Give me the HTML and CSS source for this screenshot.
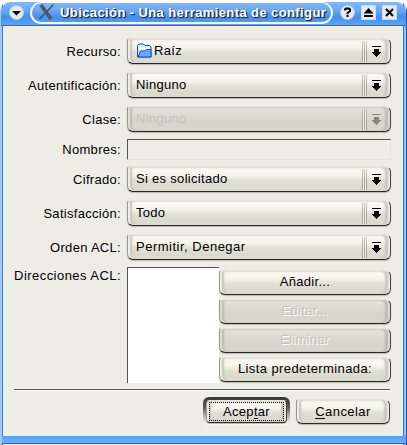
FILE: index.html
```html
<!DOCTYPE html>
<html lang="es">
<head>
<meta charset="utf-8">
<title>Ubicación</title>
<link rel="stylesheet" href="styles.css">
</head>
<body>
<svg class="defs" width="0" height="0">
  <symbol id="drop" viewBox="0 0 9 11"><path d="M0 0h9v1H0zM2 3h5v3h2v1H8v1H7v1H6v1H5v1H4v-1H3V9H2V8H1V7H0V6h2z"/></symbol>
</svg>
<main class="window">
  <header class="titlebar">
    <svg class="round" viewBox="0 0 15 15"><circle cx="7.5" cy="7.5" r="7"/><path d="M3 6h9L7.500 10.500z"/></svg>
    <div class="caption">
      <svg class="logo" viewBox="0 0 17 16"><path class="thin" d="M15.500 0.500L1.500 15"/><path class="thick" d="M3 1L13 15"/></svg>
      <span>Ubicación - Una herramienta de configur</span>
    </div>
    <svg class="round help" viewBox="0 0 15 15"><circle cx="7.500" cy="7.500" r="7"/><path class="mark" d="M5 5.500V4.500L6 3.500H9L10 4.500V6L7.500 8V9.200"/><path d="M6.500 10h2v2h-2z"/></svg>
    <svg class="square" viewBox="0 0 15 15"><rect width="15" height="15"/><path d="M7.500 3L12.500 8.500h-10zM3 10h9v2H3z"/></svg>
    <svg class="square" viewBox="0 0 15 15"><rect width="15" height="15"/><path class="mark" d="M4 4l7 7M11 4l-7 7"/></svg>
  </header>
  <section class="content">
    <form class="form">
      <label>Recurso:</label>
      <div class="bevel combo"><svg class="folder" viewBox="0 0 16 15"><path class="back" d="M1 14V2.500L2.500 1H7l1.500 1.500H13L14.500 4v10z"/><path class="paper" d="M3 6V4h10v3z"/><path class="front" d="M1.500 14l2.500-6h4L9.500 6.500h5V14z"/></svg><span>Raíz</span><i class="grip"></i><svg class="drop"><use href="#drop"/></svg></div>
      <label>Autentificación:</label>
      <div class="bevel combo"><span>Ninguno</span><i class="grip"></i><svg class="drop"><use href="#drop"/></svg></div>
      <label>Clase:</label>
      <div class="bevel combo off"><span>Ninguno</span><i class="grip"></i><svg class="drop"><use href="#drop"/></svg></div>
      <label>Nombres:</label>
      <div class="field"></div>
      <label>Cifrado:</label>
      <div class="bevel combo"><span>Si es solicitado</span><i class="grip"></i><svg class="drop"><use href="#drop"/></svg></div>
      <label>Satisfacción:</label>
      <div class="bevel combo"><span>Todo</span><i class="grip"></i><svg class="drop"><use href="#drop"/></svg></div>
      <label>Orden ACL:</label>
      <div class="bevel combo"><span class="order">Permitir, Denegar</span><i class="grip"></i><svg class="drop"><use href="#drop"/></svg></div>
      <label class="addresses">Direcciones ACL:</label>
      <div class="acl">
        <div class="list"></div>
        <div class="actions">
          <div class="bevel button">Añadir...</div>
          <div class="bevel button off">Editar...</div>
          <div class="bevel button off">Eliminar</div>
          <div class="bevel button wide">Lista predeterminada:</div>
        </div>
      </div>
    </form>
    <div class="separator"></div>
    <footer class="footer">
      <div class="default"><div class="bevel button"><span class="focus">Acep<u>t</u>ar</span></div></div>
      <div class="bevel button cancel"><span><u>C</u>ancelar</span></div>
    </footer>
  </section>
</main>
</body>
</html>
```
FILE: styles.css
```css
* { box-sizing: border-box; }
body {
  margin: 0;
  width: 407px;
  height: 445px;
  overflow: hidden;
  background: #fff;
  font: 13px/16px "Liberation Sans", Arial, sans-serif;
  letter-spacing: 0.3px;
  color: #000;
}
.defs { position: absolute; }
svg { display: block; flex: none; }
.window {
  width: 407px;
  height: 445px;
  padding: 2px 1px 1px 0;
  display: flex;
  flex-direction: column;
  background: linear-gradient(#fff, #fff) 0 0 / 100% 2px no-repeat, linear-gradient(90deg, #a1c8f5 2px, #3680dc 2px, #3680dc 3px, #edede5 3px, #edede5 403px, #2f76cc 403px, #2f76cc 404px, #92c2fb 404px, #92c2fb 406px, #28599a 406px);
  border-radius: 12px 12px 0 0;
}
.titlebar {
  height: 24px;
  flex: none;
  display: flex;
  align-items: flex-start;
  margin-left: 1px;
  padding: 0 0 0 8px;
  border-radius: 10px 10px 0 0;
  border-bottom: 1px solid #2a72cd;
  background: linear-gradient(#85b9f5, #65a6f2 40%, #448fe9 65%, #5ba4f4);
}
.round, .square { width: 15px; height: 15px; margin-top: 3px; }
.round circle, .square rect { fill: #e5eaf0; stroke: #b8c8dc; }
.square { margin-left: 6px; }
.help { margin-left: 7px; }
.mark { fill: none; stroke: #000; stroke-width: 2; }
.caption {
  display: flex;
  width: 303px;
  height: 22px;
  margin-left: 6px;
  padding-left: 6px;
  border: 2px solid #f4f9ff;
  border-top-width: 1px;
  border-radius: 11px;
  color: #fff;
  font-weight: bold;
  font-size: 13px;
  line-height: 20px;
  letter-spacing: 0.4px;
  white-space: nowrap;
  text-shadow: 1px 1px 0 #173865, 1px 1px 1px #000;
}
.logo { width: 17px; height: 16px; margin: 1px 5px 0 0; fill: none; }
.logo .thin { stroke: #454b54; stroke-width: 1.300; }
.logo .thick { stroke: #50565e; stroke-width: 3.500; }
.content {
  flex: 1;
  margin: 0 2px 0 3px;
  padding: 12px 13px 0 11px;
  background: #edede5;
  border-right: 0;
  margin-right: 3px;
  padding-right: 12px;
}
.form {
  display: grid;
  grid-template-columns: 107px 264px;
  grid-template-rows: 26px 26px 26px 18px 26px 26px 26px 116px;
  column-gap: 6px;
  row-gap: 8px;
  margin: 0;
}
.form label { align-self: center; padding-top: 2px; text-align: right; white-space: nowrap; }
.form .addresses { align-self: start; padding-top: 0; letter-spacing: 0.45px; }
.bevel {
  border: 1px solid #96968e;
  border-top-color: #e4e4dc;
  border-bottom-color: #292927;
  border-right-color: #45453f;
  border-radius: 3px 6px 6px 6px;
  background: linear-gradient(#fafaf2, #f4f4eb 35%, #e1e0d6 55%, #dad9ce 85%, #e4e1d6);
  box-shadow: inset 2px 0 1px #efefe7, inset 4px 0 2px #c5c5bc, inset -2px 0 1px #e9e9e1, inset -5px 0 2px #c8c8bf, 0 1px 1px #b8b8ae;
}
.combo {
  height: 26px;
  display: flex;
  align-items: center;
  padding: 0 9px 0 8px;
}
.combo span { margin-top: -1px; }
.combo .order { letter-spacing: 0.5px; }
.folder { width: 17px; height: 15px; margin: -1px 1px 0 0; }
.back { fill: #d8ebff; stroke: #1d4cba; }
.paper { fill: #fff; }
.front { fill: #65a9f5; stroke: #174cc6; }
.grip {
  width: 5px;
  height: 21px;
  margin-left: auto;
  background: repeating-linear-gradient(90deg, #a4a49b 0 1px, #f0f0e7 1px 2px);
  -webkit-mask: linear-gradient(#0007, #000 60%);
  mask: linear-gradient(#0007, #000 60%);
}
.drop { width: 9px; height: 11px; margin: 0 0 0 5px; shape-rendering: crispEdges; }
.off {
  color: #c4c4bb;
  background: linear-gradient(#e3e3db, #d5d5cc 60%, #d7d7ce);
  box-shadow: inset 2px 0 1px #dedfd6, inset 4px 0 2px #bbbbb2, inset -2px 0 1px #dcdcd4, inset -5px 0 2px #bcbcb3, 0 1px 1px #b8b8ae;
}
.off .drop { fill: #85857d; }
.button.off { text-shadow: 1px 1px 0 #fff; }
.field {
  height: 21px;
  margin-top: -1px;
  border: 1px solid #e3e3e1;
  border-top-color: #555550;
  border-left-color: #555550;
}
.acl { display: flex; height: 116px; margin-top: -1px; }
.list { width: 92px; height: 116px; background: #fff; border-top: 1px solid #555550; border-left: 1px solid #555550; }
.actions { width: 172px; display: flex; flex-direction: column; gap: 4px; padding-top: 3px; }
.button { height: 25px; flex: none; display: flex; align-items: center; justify-content: center; padding-bottom: 1px; }
.wide { letter-spacing: 0.4px; }
.separator { height: 2px; margin: 5px 1px 0 0; border-top: 1px solid #555550; border-bottom: 1px solid #fff; }
.footer { display: flex; justify-content: flex-end; padding: 6px 1px 0 0; }
.default {
  width: 87px;
  height: 28px;
  padding: 3px 3px 2px;
  border-radius: 6px;
  background: linear-gradient(#383834, #54544e 35%, #d5d5cd 80%, #fff);
}
.default .button { height: 23px; border-radius: 4px; }
.focus { width: 75px; height: 19px; border: 1px dotted #000; text-align: center; line-height: 18px; }
.cancel { width: 94px; margin: 2px 0 0 6px; padding-bottom: 0; letter-spacing: 0.45px; }
u { text-underline-offset: 2px; text-decoration-thickness: 1px; }
.window::after {
  content: "";
  flex: none;
  height: 7px;
  margin-left: 2px;
  border-bottom: 1px solid #2d68b0;
  background: linear-gradient(#5a9eef, #6aadf8);
}
```
